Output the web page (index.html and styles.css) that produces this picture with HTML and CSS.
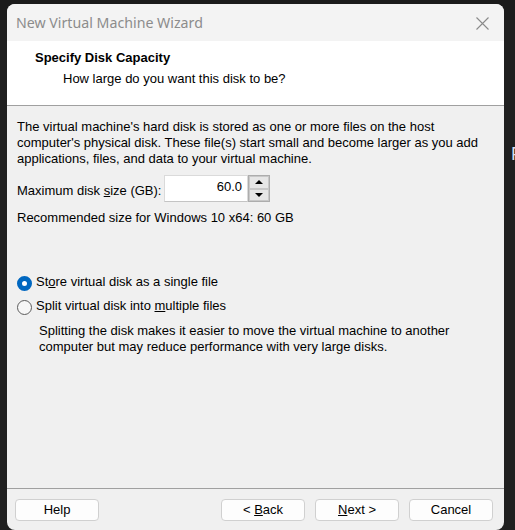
FILE: index.html
```html
<!DOCTYPE html>
<html lang="en">
<head>
<meta charset="utf-8">
<title>New Virtual Machine Wizard</title>
<link rel="stylesheet" href="styles.css">
</head>
<body>
<span class="desktop-glyph">F</span>
<div class="window">
  <div class="titlebar">
    <span class="title">New Virtual Machine Wizard</span>
    <svg class="close" width="13" height="13" viewBox="0 0 13 13" aria-label="Close">
      <path d="M0.5 0.5 L12.5 12.5 M12.5 0.5 L0.5 12.5" stroke="#8a8a8a" stroke-width="1.1" fill="none"/>
    </svg>
  </div>
  <div class="header">
    <div class="heading">Specify Disk Capacity</div>
    <div class="subheading">How large do you want this disk to be?</div>
  </div>
  <div class="content">
    <p class="intro">The virtual machine's hard disk is stored as one or more files on the host<br>computer's physical disk. These file(s) start small and become larger as you add<br>applications, files, and data to your virtual machine.</p>
    <div class="size-row">
      <span class="size-label">Maximum disk <u>s</u>ize (GB):</span>
      <div class="spin-field">60.0</div>
      <div class="spinner">
        <div class="spin-btn"><span class="tri-up"></span></div>
        <div class="spin-btn"><span class="tri-down"></span></div>
      </div>
    </div>
    <p class="recommend">Recommended size for Windows 10 x64: 60 GB</p>
    <div class="radio-row first">
      <span class="radio checked"></span>
      <span>St<u>o</u>re virtual disk as a single file</span>
    </div>
    <div class="radio-row">
      <span class="radio"></span>
      <span>Split virtual disk into <u>m</u>ultiple files</span>
    </div>
    <p class="note">Splitting the disk makes it easier to move the virtual machine to another<br>computer but may reduce performance with very large disks.</p>
  </div>
  <div class="footer">
    <button class="btn">Help</button>
    <div class="nav">
      <button class="btn">&lt; <u>B</u>ack</button>
      <button class="btn"><u>N</u>ext &gt;</button>
      <button class="btn">Cancel</button>
    </div>
  </div>
</div>
</body>
</html>
```
FILE: styles.css
```css
html, body {
  margin: 0;
  padding: 0;
}
body {
  width: 515px;
  height: 530px;
  overflow: hidden;
  position: relative;
  background: linear-gradient(to bottom, #1b1b1b 20px, #202020 20px);
  font-family: "Liberation Sans", Arial, sans-serif;
  font-size: 13px;
  line-height: 16px;
  color: #000;
}
.desktop-glyph {
  position: absolute;
  left: 511px;
  top: 144px;
  font-size: 18px;
  line-height: 20px;
  color: #dcdcea;
}
.window {
  margin: 4px 0 0 7px;
  width: 497px;
  height: 526px;
  background: #f0f0f0;
  border-radius: 8px;
  overflow: hidden;
  display: flex;
  flex-direction: column;
}
.titlebar {
  height: 37px;
  flex: none;
  background: #f3f3f3;
  display: flex;
  align-items: center;
  justify-content: space-between;
  padding: 0 15px 0 9px;
}
.title {
  font-family: "Noto Sans", sans-serif;
  font-size: 14.2px;
  color: #8c8c8c;
  line-height: 20px;
  margin-top: 1px;
}
.close {
  display: block;
  margin-top: 1px;
}
.header {
  height: 64px;
  flex: none;
  background: #fff;
  border-bottom: 1px solid #a0a0a0;
  padding: 9px 0 0 28px;
  box-sizing: border-box;
  height: 65px;
}
.heading {
  font-weight: bold;
}
.subheading {
  margin: 5px 0 0 28px;
}
.content {
  flex: 1;
  padding: 13px 10px 0 10px;
}
.intro {
  margin: 0;
}
.size-row {
  display: flex;
  align-items: flex-start;
  margin-top: 8px;
}
.size-label {
  margin-top: 8px;
  width: 147px;
}
.spin-field {
  width: 84px;
  height: 27px;
  box-sizing: border-box;
  background: #fff;
  border: 1px solid #dadada;
  border-bottom-color: #c4c4c4;
  text-align: right;
  padding: 3px 5px 0 0;
}
.spinner {
  width: 22px;
  height: 27px;
  box-sizing: border-box;
  border: 1px solid #adadad;
  display: flex;
  flex-direction: column;
}
.spin-btn {
  flex: 1;
  background: #e6e6e6;
  border: 1px solid #c8c8c8;
  display: flex;
  align-items: center;
  justify-content: center;
}
.tri-up, .tri-down {
  width: 0;
  height: 0;
  border-left: 4px solid transparent;
  border-right: 4px solid transparent;
}
.tri-up {
  border-bottom: 4px solid #000;
}
.tri-down {
  border-top: 4px solid #000;
}
.recommend {
  margin: 8px 0 0 0;
}
.radio-row {
  display: flex;
  align-items: flex-start;
  gap: 4px;
  margin-top: 7px;
}
.radio-row.first {
  margin-top: 48px;
}
.radio {
  width: 15px;
  height: 15px;
  box-sizing: border-box;
  border-radius: 50%;
  border: 1px solid #5c5c5c;
  background: #f7f7f7;
  margin-top: 2px;
  flex: none;
}
.radio.checked {
  border: 5px solid #0067c0;
  background: #fff;
}
.note {
  margin: 8px 0 0 22px;
}
.footer {
  flex: none;
  height: 42px;
  border-top: 1px solid #a0a0a0;
  box-sizing: border-box;
  display: flex;
  justify-content: space-between;
  padding: 10px 11px 0 8px;
}
.nav {
  display: flex;
  gap: 10px;
}
.btn {
  width: 84px;
  height: 22px;
  box-sizing: border-box;
  border: 1px solid #d0d0d0;
  border-radius: 4px;
  background: #fdfdfd;
  font-family: "Liberation Sans", Arial, sans-serif;
  font-size: 13px;
  line-height: 16px;
  color: #000;
  padding: 0;
}
```
